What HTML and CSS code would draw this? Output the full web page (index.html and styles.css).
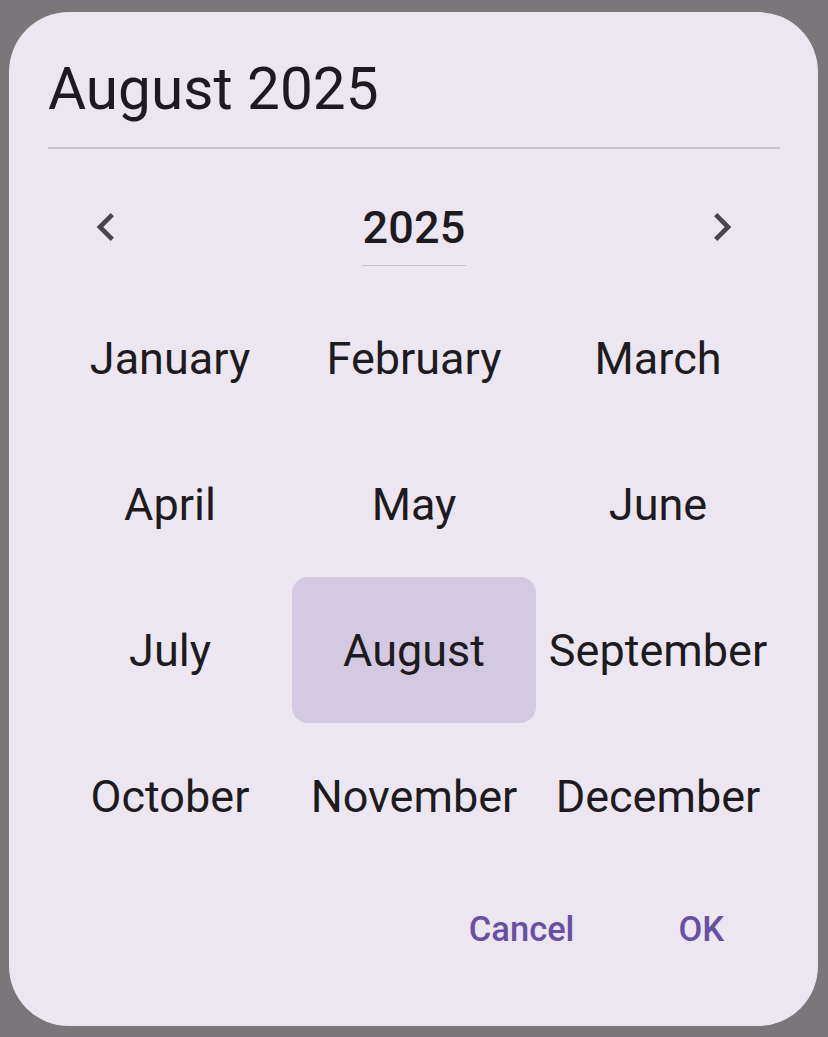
FILE: index.html
```html
<!DOCTYPE html>
<html lang="en">
<head>
<meta charset="utf-8">
<title>Month picker</title>
<link rel="stylesheet" href="styles.css">
</head>
<body>
<div class="dialog">
  <div class="title">August 2025</div>
  <div class="divider"></div>
  <div class="nav">
    <button class="icon-btn" aria-label="Previous year">
      <svg viewBox="0 0 24 24" width="56" height="56"><path d="M15.41 7.41L14 6l-6 6 6 6 1.41-1.41L10.83 12z" fill="#49454f"/></svg>
    </button>
    <div class="year">2025</div>
    <button class="icon-btn" aria-label="Next year">
      <svg viewBox="0 0 24 24" width="56" height="56"><path d="M10 6L8.59 7.41 13.17 12l-4.58 4.59L10 18l6-6z" fill="#49454f"/></svg>
    </button>
  </div>
  <div class="grid">
    <div class="month">January</div>
    <div class="month">February</div>
    <div class="month">March</div>
    <div class="month">April</div>
    <div class="month">May</div>
    <div class="month">June</div>
    <div class="month">July</div>
    <div class="month selected">August</div>
    <div class="month">September</div>
    <div class="month">October</div>
    <div class="month">November</div>
    <div class="month">December</div>
  </div>
  <div class="actions">
    <button class="text-btn">Cancel</button>
    <button class="text-btn">OK</button>
  </div>
</div>
</body>
</html>
```
FILE: styles.css
```css
html, body {
  margin: 0;
  padding: 0;
}
body {
  width: 828px;
  height: 1037px;
  background: #7a7679;
  font-family: Roboto, "Noto Sans", sans-serif;
  color: #1d1b20;
  overflow: hidden;
}
.dialog {
  margin: 12px 0 0 9px;
  width: 809px;
  height: 1014px;
  box-sizing: border-box;
  padding: 43px 38px 0 39px;
  background: #ece6f0;
  border-radius: 60px;
  display: flex;
  flex-direction: column;
}
.title {
  font-size: 58.5px;
  line-height: 68px;
  height: 68px;
  font-weight: 400;
}
.divider {
  margin-top: 24px;
  height: 2px;
  background: #cac4d0;
}
.nav {
  display: flex;
  justify-content: space-between;
  align-items: flex-start;
  padding: 56px 30px 0 30px;
  height: 80px;
}
.icon-btn {
  border: 0;
  background: transparent;
  padding: 0;
  margin-top: -6px;
  width: 56px;
  height: 56px;
  display: flex;
}
.year {
  font-size: 45px;
  line-height: 45px;
  font-weight: 500;
  padding-bottom: 15px;
  border-bottom: 1px solid #c6c1c9;
  letter-spacing: 0.2px;
}
.grid {
  display: grid;
  grid-template-columns: repeat(3, 244px);
  grid-template-rows: repeat(4, 146px);
}
.month {
  display: flex;
  align-items: center;
  justify-content: center;
  font-size: 45px;
  line-height: 1;
  border-radius: 16px;
}
.month.selected {
  background: #d3c9e1;
}
.actions {
  display: flex;
  justify-content: flex-end;
  gap: 56px;
  padding: 20px 32px 0 0;
}
.text-btn {
  border: 0;
  background: transparent;
  font-family: Roboto, "Noto Sans", sans-serif;
  font-size: 34.5px;
  font-weight: 500;
  color: #6750a4;
  height: 80px;
  padding: 0 24px;
  line-height: 1;
}
```
